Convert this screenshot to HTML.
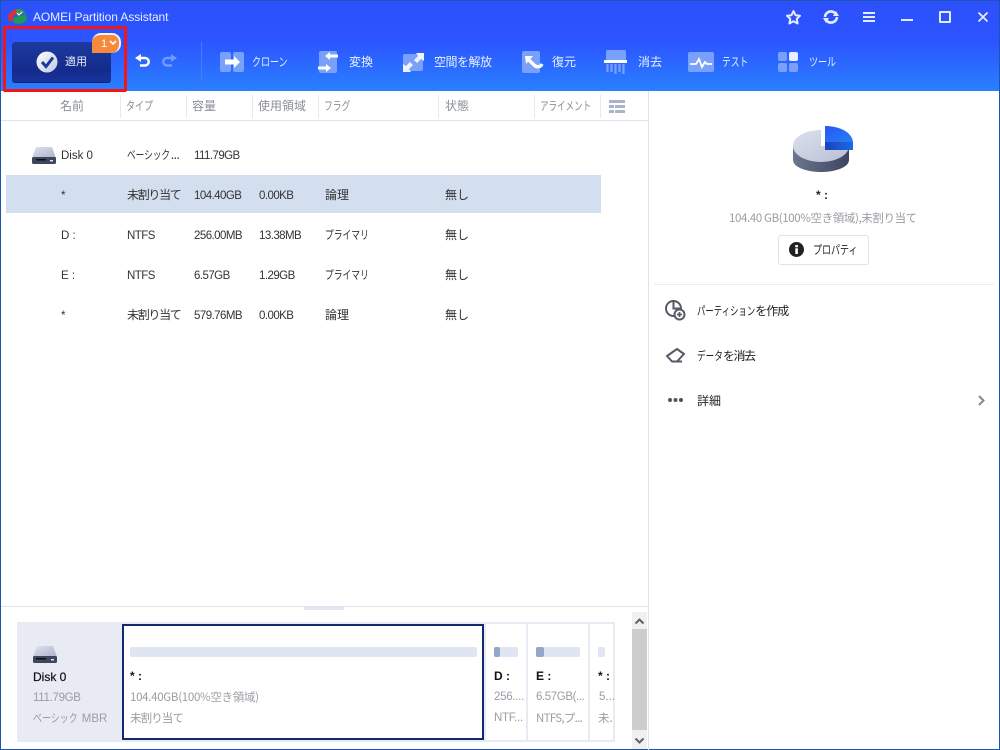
<!DOCTYPE html>
<html lang="ja"><head><meta charset="utf-8"><title>AOMEI Partition Assistant</title>
<style>
html,body{margin:0;padding:0;background:#fff}
#w{position:relative;width:1000px;height:750px;overflow:hidden;background:#fff;font-family:"Liberation Sans","Noto Sans CJK JP",sans-serif;font-size:11.5px;color:#333}
#w div,#w span.t,#w svg{position:absolute}
.t{position:absolute;white-space:nowrap;line-height:16px}
.cj{font-family:"Noto Sans CJK JP",sans-serif;font-size:12px}
.h{color:#8a8f98;top:98px;font-family:"Noto Sans CJK JP",sans-serif;font-size:12px}
.tb{color:#e8f0ff;top:54px;font-family:"Noto Sans CJK JP",sans-serif;font-size:12px}
.g{color:#9a9da3}
.n{letter-spacing:-.55px}
.s{transform-origin:0 0}
.q{display:inline-block;transform-origin:0 0}
.m{letter-spacing:-1.3px}
.b{color:#111;font-weight:bold;font-size:12px}
.sep{top:95px;width:1px;height:23px;background:#e4e8f0}
</style></head><body><div id="w">
<div style="left:0;top:0;width:1000px;height:91px;background:linear-gradient(#2c50fc 0,#2c54ff 45%,#2a80ff 100%)"></div>
<div style="left:0;top:0;width:1000px;height:1px;background:#1a56b0"></div>
<div style="left:0;top:0;width:1px;height:750px;background:#1a56b0"></div>
<div style="left:999px;top:0;width:1px;height:750px;background:#1a56b0"></div>
<div style="left:0;top:749px;width:1000px;height:1px;background:#1a56b0"></div>

<svg style="left:7px;top:8px" width="21" height="17" viewBox="0 0 21 17"><path d="M1 10C1 5 5 2 9 1.500L10 6 6 8 6 13 2 13.500Z" fill="#d8322f"/><path d="M9 1.500C13 0 17 2 18 5L10 8Z" fill="#3a9a4a"/><path d="M6 10L19 6 20 11C18 15 12 17 7 15Z" fill="#1f9a50"/><path d="M10 5l2 2 3-3" stroke="#fff" fill="none"/></svg>
<span class="t" style="left:33px;top:9px;color:#e6eeff;font-size:12px;letter-spacing:-.08px">AOMEI Partition Assistant</span>

<!-- window icons -->
<svg style="left:785px;top:9px" width="17" height="16" viewBox="0 0 17 16"><path d="M8.500 2l2 4.200 4.500.6-3.300 3.100.9 4.600-4.100-2.300-4.100 2.300.9-4.600L2 6.800l4.500-.6z" fill="none" stroke="#e4ecff" stroke-width="2" stroke-linejoin="round"/></svg>
<svg style="left:822px;top:8px" width="18" height="18" viewBox="0 0 18 18"><path d="M3 9a6 6 0 0 1 10-4M15 9a6 6 0 0 1-10 4" fill="none" stroke="#e4ecff" stroke-width="2.600"/><path d="M11 8h6l-3-5zM7 10H1l3 5z" fill="#e4ecff"/></svg>
<div style="left:863px;top:12px;width:12px;height:2px;background:#e4ecff"></div><div style="left:863px;top:16px;width:12px;height:2px;background:#e4ecff"></div><div style="left:863px;top:20px;width:12px;height:2px;background:#e4ecff"></div>
<div style="left:901px;top:19px;width:12px;height:2px;background:#e4ecff"></div>
<div style="left:939px;top:11px;width:8px;height:8px;border:2px solid #e4ecff;border-radius:1px"></div>
<svg style="left:976px;top:10px" width="14" height="14" viewBox="0 0 14 14"><path d="M2.500 2.500l9 9M11.500 2.500l-9 9" stroke="#e4ecff" stroke-width="1.800"/></svg>

<!-- apply -->
<div style="left:12px;top:42px;width:99px;height:41px;border-radius:3px;background:linear-gradient(#1d3a9e,#142b8c 70%,#18339e);border-bottom:1px solid #11236f;box-sizing:border-box"></div>
<svg style="left:36px;top:51px" width="23" height="23" viewBox="0 0 23 23"><defs><linearGradient id="c" x1="0" y1="0" x2="1" y2="1"><stop offset="0" stop-color="#fff"/><stop offset="1" stop-color="#c0c8e0"/></linearGradient></defs><circle cx="11" cy="11" r="10.500" fill="url(#c)"/><path d="M6 11l4 4.500 7-9" fill="none" stroke="#1c3a9e" stroke-width="3"/></svg>
<span class="t cj" style="left:65px;top:53px;color:#e8eeff;font-size:11px">適用</span>
<div style="left:92px;top:33px;width:27px;height:18px;background:#f58a3c;border:2px solid #f3f3f3;border-bottom:0;border-left:0;border-radius:9px 9px 9px 0"></div>
<span class="t" style="left:101px;top:36px;color:#fff;font-size:11px">1</span>
<svg style="left:109px;top:40px" width="8" height="6" viewBox="0 0 8 6"><path d="M1 1l3 3 3-3" fill="none" stroke="#fff" stroke-width="1.600"/></svg>
<div style="left:3px;top:26px;width:118px;height:60px;border:3px solid #f4141c;border-radius:2px"></div>
<svg style="left:135px;top:54px" width="16" height="14" viewBox="0 0 16 14"><path d="M5 4H10a3.500 3.500 0 0 1 0 7.500H5" fill="none" stroke="#fff" stroke-width="2.400"/><path d="M6 0v8L0 4z" fill="#fff"/></svg>
<svg style="left:161px;top:54px" width="16" height="14" viewBox="0 0 16 14"><path d="M11 4H6a3.500 3.500 0 0 0 0 7.500h5" fill="none" stroke="#6f9bff" stroke-width="2.400"/><path d="M10 0v8l6-4z" fill="#6f9bff"/></svg>
<div style="left:201px;top:42px;width:1px;height:39px;background:#4a7cf8"></div>

<!-- toolbar icons -->
<svg style="left:220px;top:52px" width="25" height="21" viewBox="0 0 25 21"><rect width="11" height="20" rx="2" fill="#79a0fb"/><rect x="13" width="11" height="20" rx="2" fill="#79a0fb"/><path d="M5 7.500h9V4l6 6-6 6v-3.500H5z" fill="#fff"/></svg>
<span class="t tb s" style="left:252px;transform:scaleX(.75)">クローン</span>
<svg style="left:318px;top:51px" width="22" height="23" viewBox="0 0 22 23"><rect x="1" y="0" width="18" height="22" rx="2" fill="#79a0fb"/><path d="M20 3.500h-8V1L7 5l5 4V6.500h8zM0 15.500h8V13l5 4-5 4v-2.500H0z" fill="#fff"/></svg>
<span class="t tb" style="left:349px">変換</span>
<svg style="left:402px;top:52px" width="23" height="21" viewBox="0 0 23 21"><rect x="1" y="2" width="20" height="17" rx="2" fill="#79a0fb"/><path d="M14 1h8v8l-3-2-4 4-3-3 4-4zM9 20H1v-8l3 2 4-4 3 3-4 4z" fill="#eef3ff"/></svg>
<span class="t tb" style="left:434px;letter-spacing:-.5px">空間を解放</span>
<svg style="left:521px;top:51px" width="23" height="23" viewBox="0 0 23 23"><rect x="1" y="0" width="18" height="22" rx="2" fill="#79a0fb"/><path d="M4 5h8l-7 8z" fill="#fff"/><path d="M7 8l6 6c2 2 6 3 8-1" fill="none" stroke="#fff" stroke-width="3.500"/></svg>
<span class="t tb" style="left:552px">復元</span>
<svg style="left:604px;top:50px" width="25" height="24" viewBox="0 0 25 24"><path d="M2 2a2 2 0 0 1 2-2h16a2 2 0 0 1 2 2v8H2z" fill="#79a0fb"/><rect x="0" y="10" width="23" height="3" fill="#fff"/><path d="M3.500 14v8M7.500 14v8M11.500 14v10M15.500 14v8M19.500 14v10" stroke="#79a0fb" stroke-width="2.200"/></svg>
<span class="t tb" style="left:638px">消去</span>
<svg style="left:688px;top:52px" width="26" height="20" viewBox="0 0 26 20"><rect width="26" height="20" rx="2" fill="#79a0fb"/><path d="M2 12h6l3-5 3 8 3-5 2 2h5" fill="none" stroke="#fff" stroke-width="1.800"/></svg>
<span class="t tb s" style="left:722px;transform:scaleX(.73)">テスト</span>
<svg style="left:778px;top:52px" width="20" height="20" viewBox="0 0 20 20"><rect width="9" height="9" rx="2" fill="#79a0fb"/><rect x="11" width="9" height="9" rx="2" fill="#e8eeff"/><rect y="11" width="9" height="9" rx="2" fill="#79a0fb"/><rect x="11" y="11" width="9" height="9" rx="2" fill="#79a0fb"/></svg>
<span class="t tb s" style="left:809px;transform:scaleX(.75)">ツール</span>

<!-- table header -->
<span class="t h" style="left:60px">名前</span><span class="t h s" style="left:126px;transform:scaleX(.75)">タイプ</span><span class="t h" style="left:192px">容量</span><span class="t h" style="left:258px">使用領域</span><span class="t h s" style="left:324px;transform:scaleX(.73)">フラグ</span><span class="t h" style="left:445px">状態</span><span class="t h s" style="left:540px;transform:scaleX(.71)">アライメント</span>
<div class="sep" style="left:120px"></div><div class="sep" style="left:186px"></div><div class="sep" style="left:252px"></div><div class="sep" style="left:318px"></div><div class="sep" style="left:438px"></div><div class="sep" style="left:534px"></div><div class="sep" style="left:600px"></div>
<div style="left:609px;top:100px;width:16px;height:3px;background:#a8b5c8"></div>
<div style="left:609px;top:105px;width:5px;height:3px;background:#a8b5c8"></div><div style="left:615px;top:105px;width:10px;height:3px;background:#a8b5c8"></div>
<div style="left:609px;top:110px;width:5px;height:3px;background:#a8b5c8"></div><div style="left:615px;top:110px;width:10px;height:3px;background:#a8b5c8"></div>
<div style="left:1px;top:120px;width:647px;height:1px;background:#dde3ee"></div>
<div style="left:648px;top:91px;width:1px;height:659px;background:#dde3ee"></div>

<!-- rows -->
<div style="left:6px;top:175px;width:595px;height:38px;background:#d3dfef"></div>
<svg style="left:32px;top:146px" width="24" height="18" viewBox="0 0 24 18"><defs><linearGradient id="d" x1="0" y1="0" x2="1" y2="1"><stop offset="0" stop-color="#dfe3ee"/><stop offset="1" stop-color="#aab2c8"/></linearGradient></defs><path d="M4 1h16l4 11H0z" fill="url(#d)"/><rect y="11" width="24" height="7" rx="1.500" fill="#3e465e"/><rect x="4" y="13" width="10" height="1.500" fill="#111"/><rect x="18" y="14" width="3" height="1.500" fill="#dde"/></svg>
<span class="t" style="left:61px;top:148px">Disk 0</span><span class="t cj" style="left:127px;top:147px"><span class="q" style="transform:scaleX(.72);margin-right:-17px">ベーシック</span><span style="margin-left:1px;letter-spacing:-.5px">...</span></span><span class="t n" style="left:194px;top:148px">111.79GB</span>
<span class="t" style="left:61px;top:188px">*</span><span class="t cj m" style="left:127px;top:187px">未割り当て</span><span class="t n" style="left:194px;top:188px">104.40GB</span><span class="t n" style="left:259px;top:188px">0.00KB</span><span class="t cj" style="left:325px;top:187px">論理</span><span class="t cj" style="left:445px;top:187px">無し</span>
<span class="t" style="left:61px;top:228px">D :</span><span class="t n" style="left:127px;top:228px">NTFS</span><span class="t n" style="left:194px;top:228px">256.00MB</span><span class="t n" style="left:259px;top:228px">13.38MB</span><span class="t cj s" style="left:325px;top:227px;transform:scaleX(.73)">プライマリ</span><span class="t cj" style="left:445px;top:227px">無し</span>
<span class="t" style="left:61px;top:268px">E :</span><span class="t n" style="left:127px;top:268px">NTFS</span><span class="t n" style="left:194px;top:268px">6.57GB</span><span class="t n" style="left:259px;top:268px">1.29GB</span><span class="t cj s" style="left:325px;top:267px;transform:scaleX(.73)">プライマリ</span><span class="t cj" style="left:445px;top:267px">無し</span>
<span class="t" style="left:61px;top:308px">*</span><span class="t cj m" style="left:127px;top:307px">未割り当て</span><span class="t n" style="left:194px;top:308px">579.76MB</span><span class="t n" style="left:259px;top:308px">0.00KB</span><span class="t cj" style="left:325px;top:307px">論理</span><span class="t cj" style="left:445px;top:307px">無し</span>

<!-- right panel -->
<svg style="left:790px;top:124px" width="64" height="50" viewBox="0 0 64 50"><defs><linearGradient id="p1" x1="0" y1="0" x2="1" y2="1"><stop offset="0" stop-color="#dde1ec"/><stop offset="1" stop-color="#b8c0d4"/></linearGradient><linearGradient id="p2" x1="0" y1="0" x2="1" y2="0"><stop offset="0" stop-color="#6b7690"/><stop offset="1" stop-color="#3e4560"/></linearGradient><linearGradient id="p3" x1="0" y1="0" x2="1" y2="1"><stop offset="0" stop-color="#2a55f5"/><stop offset="1" stop-color="#2480f5"/></linearGradient><linearGradient id="p4" x1="0" y1="0" x2="1" y2="0"><stop offset="0" stop-color="#1c40c0"/><stop offset="1" stop-color="#1a6ce0"/></linearGradient></defs><path d="M3 22v14c0 7 13 12 28 12s28-5 28-12V22z" fill="url(#p2)"/><path d="M31 6C15 6 3 13 3 22c0 9 13 16 28 16s28-7 28-16H31z" fill="url(#p1)"/><path d="M35 2c14 0 27 6 28 16H35z" fill="url(#p3)"/><rect x="35" y="18" width="28" height="8" fill="url(#p4)"/></svg>
<span class="t" style="left:816px;top:187px;color:#222;font-weight:bold;font-size:12px">* :</span>
<span class="t cj g" style="left:729px;top:210px;font-size:11.500px;letter-spacing:-.38px">104.40 GB(100%空き領域),未割り当て</span>
<div style="left:778px;top:235px;width:89px;height:28px;border:1px solid #dde3ee;border-radius:3px"></div>
<svg style="left:789px;top:242px" width="15" height="15" viewBox="0 0 15 15"><circle cx="7.500" cy="7.500" r="7.500" fill="#222"/><rect x="6.300" y="6.300" width="2.600" height="5.700" fill="#fff"/><rect x="6.300" y="3" width="2.600" height="2.300" fill="#fff"/></svg>
<span class="t cj s" style="left:813px;top:242px;color:#222;transform:scaleX(.75)">プロパティ</span>
<div style="left:654px;top:284px;width:340px;height:1px;background:#e9ecf2"></div>
<svg style="left:665px;top:300px" width="21" height="21" viewBox="0 0 21 21"><circle cx="8.500" cy="8.500" r="7.500" fill="none" stroke="#555a66" stroke-width="2"/><path d="M8.500 1V8.500H16" fill="none" stroke="#555a66" stroke-width="2"/><circle cx="14.500" cy="14.500" r="5" fill="#fff" stroke="#555a66" stroke-width="2"/><path d="M12 14.500h5M14.500 12v5" stroke="#555a66" stroke-width="1.800"/></svg>
<span class="t cj" style="left:697px;top:303px;color:#222"><span class="q" style="transform:scaleX(.7);margin-right:-25px">パーティション</span><span style="letter-spacing:-1px">を作成</span></span>
<svg style="left:665px;top:346px" width="20" height="18" viewBox="0 0 20 18"><path d="M2 10L12 3l7 5-7 7.500H7z" fill="none" stroke="#555a66" stroke-width="2" stroke-linejoin="round"/><path d="M7 15.500H17" stroke="#555a66" stroke-width="2"/></svg>
<span class="t cj" style="left:697px;top:348px;color:#222"><span class="q" style="transform:scaleX(.72);margin-right:-10px">データ</span><span style="letter-spacing:-1.500px">を消去</span></span>
<svg style="left:667px;top:397px" width="17" height="6" viewBox="0 0 17 6"><circle cx="3" cy="3" r="2" fill="#555"/><circle cx="8.500" cy="3" r="2" fill="#555"/><circle cx="14" cy="3" r="2" fill="#555"/></svg>
<span class="t cj" style="left:697px;top:393px;color:#222">詳細</span>
<svg style="left:977px;top:395px" width="9" height="11" viewBox="0 0 9 11"><path d="M2 1l4.500 4.500L2 10" fill="none" stroke="#888" stroke-width="2"/></svg>

<!-- bottom -->
<div style="left:1px;top:606px;width:647px;height:1px;background:#dde3ee"></div>
<div style="left:304px;top:607px;width:40px;height:3px;background:#e3e8f0"></div>
<div style="left:17px;top:622px;width:598px;height:120px;background:#e8ebf3"></div>
<svg style="left:33px;top:645px" width="24" height="18" viewBox="0 0 24 18"><path d="M4 1h16l4 11H0z" fill="url(#d)"/><rect y="11" width="24" height="7" rx="1.500" fill="#3e465e"/><rect x="3" y="13" width="10" height="1.500" fill="#111"/><rect x="18" y="14" width="3" height="1.500" fill="#dde"/></svg>
<span class="t" style="left:33px;top:669px;color:#111;font-size:12px;-webkit-text-stroke:.2px #111">Disk 0</span>
<span class="t g" style="left:33px;top:690px;letter-spacing:-.3px">111.79GB</span>
<span class="t g cj" style="left:33px;top:710px;font-size:11.500px"><span class="q" style="transform:scaleX(.78);margin-right:-12.500px">ベーシック</span><span style="margin-left:4px;font-family:'Liberation Sans'">MBR</span></span>

<div style="left:122px;top:624px;width:358px;height:112px;background:#fff;border:2px solid #14296e"></div>
<div style="left:130px;top:647px;width:347px;height:10px;background:#e0e6f1;border-radius:2px"></div>
<span class="t b" style="left:130px;top:668px">* :</span>
<span class="t g cj" style="left:130px;top:689px;font-size:11.500px;letter-spacing:-.3px">104.40GB(100%空き領域)</span>
<span class="t g cj" style="left:130px;top:710px;font-size:11.500px;letter-spacing:-.9px">未割り当て</span>

<div style="left:486px;top:624px;width:40px;height:116px;background:#fff"></div>
<div style="left:494px;top:647px;width:24px;height:10px;background:#e0e6f1;border-radius:2px"></div>
<div style="left:494px;top:647px;width:6px;height:10px;background:#93a8c8;border-radius:2px"></div>
<span class="t b" style="left:494px;top:668px">D :</span>
<span class="t g" style="left:494px;top:689px;letter-spacing:-.3px">256....</span><span class="t g" style="left:494px;top:710px;letter-spacing:-.3px">NTF...</span>

<div style="left:528px;top:624px;width:60px;height:116px;background:#fff"></div>
<div style="left:536px;top:647px;width:44px;height:10px;background:#e0e6f1;border-radius:2px"></div>
<div style="left:536px;top:647px;width:8px;height:10px;background:#93a8c8;border-radius:2px"></div>
<span class="t b" style="left:536px;top:668px">E :</span>
<span class="t g" style="left:536px;top:689px;letter-spacing:-.4px">6.57GB(...</span><span class="t g cj" style="left:536px;top:710px;font-size:11.500px;letter-spacing:-.7px">NTFS,プ...</span>

<div style="left:590px;top:624px;width:23px;height:116px;background:#fff"></div>
<div style="left:598px;top:647px;width:7px;height:10px;background:#e0e6f1;border-radius:2px"></div>
<span class="t b" style="left:598px;top:668px">* :</span>
<span class="t g" style="left:599px;top:689px">5...</span><span class="t g cj" style="left:598px;top:710px;font-size:11.500px">未.</span>

<!-- scrollbar -->
<div style="left:632px;top:612px;width:15px;height:137px;background:#f0f0f0"></div>
<div style="left:632px;top:629px;width:15px;height:101px;background:#cdcdcd"></div>
<svg style="left:634px;top:618px" width="11" height="7" viewBox="0 0 11 7"><path d="M1.500 5.500l4-4 4 4" fill="none" stroke="#606060" stroke-width="2"/></svg>
<svg style="left:634px;top:737px" width="11" height="7" viewBox="0 0 11 7"><path d="M1.500 1.500l4 4 4-4" fill="none" stroke="#606060" stroke-width="2"/></svg>
</div></body></html>
